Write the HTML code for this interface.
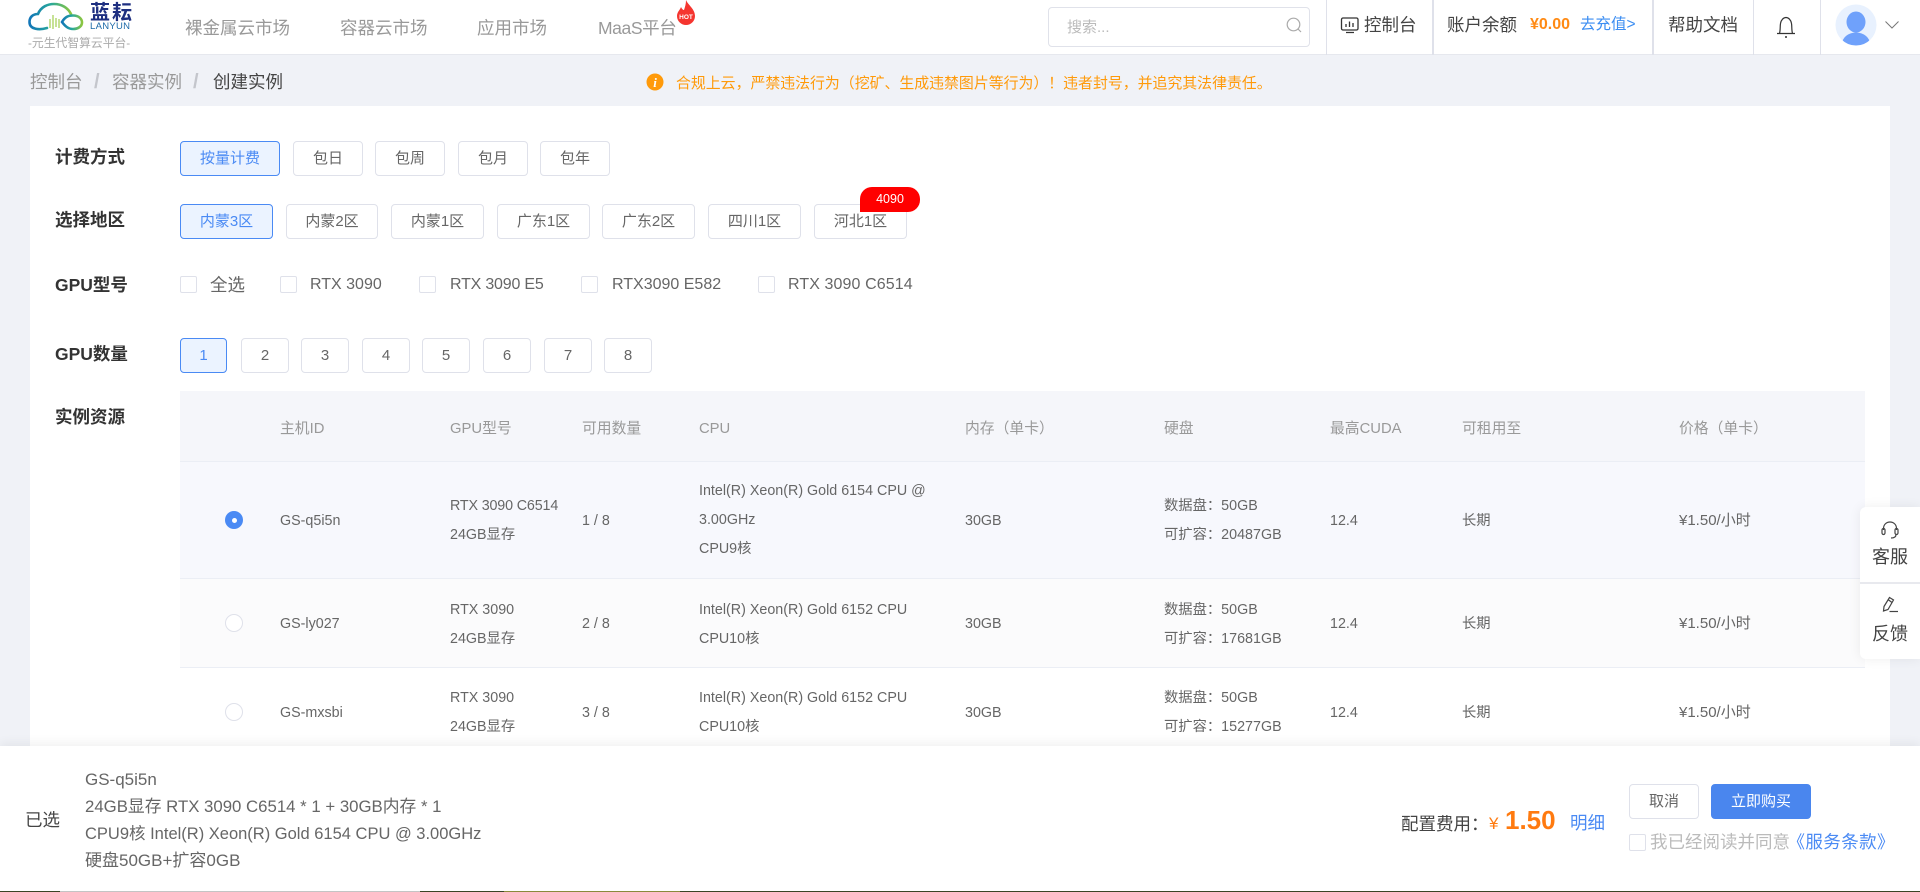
<!DOCTYPE html>
<html lang="zh-CN">
<head>
<meta charset="utf-8">
<title>创建实例</title>
<style>
*{box-sizing:border-box;margin:0;padding:0}
html,body{width:1920px;height:892px;overflow:hidden;background:#f0f2f7}
body{position:relative;font-family:"Liberation Sans","Noto Sans CJK SC",sans-serif;color:#666}
.a{position:absolute}
.t{position:absolute;white-space:nowrap;height:24px;line-height:24px}
.btn{position:absolute;height:35px;line-height:33px;border:1px solid #dfe1ea;border-radius:4px;background:#fff;text-align:center;font-size:15px;color:#666}
.btn.on{background:#ebf3ff;border-color:#4a8af4;color:#4a8af4}
.lb{position:absolute;left:55px;white-space:nowrap;height:24px;line-height:24px;font-size:17.5px;font-weight:700;color:#333}
.cb{position:absolute;width:17px;height:17px;border:1px solid #dfe1ea;border-radius:2px;background:#fff;top:276px}
.ck{position:absolute;top:273px;height:24px;line-height:24px;font-size:16px;color:#666;white-space:nowrap}
.th{position:absolute;top:417px;height:24px;line-height:24px;font-size:14.800px;color:#999;white-space:nowrap}
.td{position:absolute;margin-top:1px;height:24px;line-height:24px;font-size:14.300px;color:#666;white-space:nowrap}
.pr{font-size:15px}
.rd{position:absolute;left:225px;width:18px;height:18px;border-radius:50%;border:1px solid #dfe1ea;background:#fff}
.dv{position:absolute;top:0;width:1px;height:55px;background:#dfe1ea}
.nav{position:absolute;top:16px;height:24px;line-height:24px;font-size:17.5px;color:#999;white-space:nowrap}
.hr{position:absolute;top:13px;height:24px;line-height:24px;font-size:17.5px;color:#444;white-space:nowrap}
.bc{position:absolute;top:70px;height:24px;line-height:24px;font-size:17.5px;color:#999;white-space:nowrap}
.fl{position:absolute;left:85px;height:24px;line-height:24px;font-size:17px;color:#666;white-space:nowrap}
</style>
</head>
<body>

<!-- header -->
<div class="a" style="left:0;top:0;width:1920px;height:55px;background:#fff;border-bottom:1px solid #e6e8ee"></div>

<svg class="a" style="left:0;top:0" width="140" height="36" viewBox="0 0 140 36">
<defs><linearGradient id="g" x1="0" x2="1" y1="0" y2="0"><stop offset="0" stop-color="#1276b8"/><stop offset=".5" stop-color="#27a79b"/><stop offset="1" stop-color="#8cc63f"/></linearGradient></defs>
<path d="M47 28C40 30 29.500 30 29.500 22C29.500 17 33 14 38 14C41 6.500 48 4 54 4C62 4 68 8 71 14" fill="none" stroke="url(#g)" stroke-width="2.600" stroke-linecap="round"/>
<path d="M62 22C65 17 68 15.500 73 15.500C79 15.500 82 19 82 22.500C82 26.500 78 29 73 29C68 29 65 26 62 22" fill="none" stroke="url(#g)" stroke-width="2.600" stroke-linecap="round"/>
<path d="M50 19V28M53 15V29M56 18V27M59 19V28" stroke="#a9d25e" stroke-width="1.300"/>
</svg>
<div class="t" style="left:90px;top:1px;font-size:20px;font-weight:700;letter-spacing:2px;color:#1e2f80">蓝耘</div>
<div class="t" style="left:90px;top:15px;font-size:9.500px;letter-spacing:.3px;color:#1d6aa8">LANYUN</div>
<div class="t" style="left:28px;top:31px;font-size:11.800px;color:#aaa">-元生代智算云平台-</div>

<div class="nav" style="left:185px">裸金属云市场</div>
<div class="nav" style="left:340px">容器云市场</div>
<div class="nav" style="left:477px">应用市场</div>
<div class="nav" style="left:598px;letter-spacing:-.4px">MaaS平台</div>
<svg class="a" style="left:676px;top:0" width="20" height="26" viewBox="676 0 20 26">
<path d="M686 0C688 5 695 9 695 16A9 9 0 0 1 677 16C677 12 680 10 681 7C682 9 683 10 684 10C685 7 686 4 686 0Z" fill="#f5352f"/>
<text x="686" y="19" font-size="6.500" font-weight="700" fill="#fff" text-anchor="middle" font-family="Liberation Sans">HOT</text>
</svg>

<div class="a" style="left:1048px;top:7px;width:262px;height:40px;border:1px solid #e0e2ea;border-radius:4px"></div>
<div class="t" style="left:1067px;top:16px;font-size:15px;color:#bbb">搜索...</div>
<svg class="a" style="left:1285px;top:16px" width="18" height="18" viewBox="0 0 18 18"><circle cx="8.500" cy="8.500" r="6.300" fill="none" stroke="#aaa" stroke-width="1.200"/><path d="M13 13L16 16" stroke="#aaa" stroke-width="1.200"/></svg>

<div class="dv" style="left:1326px"></div>
<div class="dv" style="left:1432px;width:2px"></div>
<div class="dv" style="left:1652px;width:2px"></div>
<div class="dv" style="left:1753px"></div>
<div class="dv" style="left:1820px"></div>

<svg class="a" style="left:1340px;top:15px" width="20" height="20" viewBox="0 0 20 20"><rect x="1.500" y="3" width="16.500" height="12" rx="1.500" fill="none" stroke="#333" stroke-width="1.300"/><path d="M6 12V9M9.500 12V6.500M13 12V8M6 17.500H14" stroke="#333" stroke-width="1.300"/></svg>
<div class="hr" style="left:1364px">控制台</div>
<div class="hr" style="left:1447px">账户余额</div>
<div class="t" style="left:1530px;top:13px;font-size:16px;font-weight:700;color:#ff8a14">¥0.00</div>
<div class="t" style="left:1580px;top:13px;font-size:15.500px;color:#3b8df2">去充值&gt;</div>
<div class="hr" style="left:1668px">帮助文档</div>
<svg class="a" style="left:1775px;top:15px" width="22" height="24" viewBox="0 0 22 24"><path d="M2 18.500H20M4.500 18.500C5.500 15 5 11 5.500 8.500C6 5 8.500 2.500 11 2.500C13.500 2.500 16 5 16.500 8.500C17 11 16.500 15 17.500 18.500" fill="none" stroke="#333" stroke-width="1.200"/><circle cx="11" cy="22" r="1" fill="#333"/></svg>
<svg class="a" style="left:1835px;top:4px" width="42" height="42" viewBox="0 0 42 42"><defs><clipPath id="c"><circle cx="21" cy="21" r="20.500"/></clipPath></defs><circle cx="21" cy="21" r="20.500" fill="#e8f1fe"/><g clip-path="url(#c)"><ellipse cx="21" cy="18" rx="9.500" ry="10.500" fill="#6fa1fb"/><ellipse cx="21" cy="40" rx="14" ry="11.500" fill="#6fa1fb"/></g></svg>
<svg class="a" style="left:1884px;top:20px" width="16" height="10" viewBox="0 0 16 10"><path d="M1.500 1.500L8 8L14.500 1.500" fill="none" stroke="#777" stroke-width="1"/></svg>

<!-- breadcrumb -->
<div class="bc" style="left:30px">控制台</div>
<div class="bc" style="left:94px;color:#c4c6cc;font-weight:700;font-size:20px">/</div>
<div class="bc" style="left:112px">容器实例</div>
<div class="bc" style="left:193px;color:#c4c6cc;font-weight:700;font-size:20px">/</div>
<div class="bc" style="left:213px;color:#444">创建实例</div>

<svg class="a" style="left:646px;top:73px" width="18" height="18" viewBox="0 0 18 18"><circle cx="9" cy="9" r="8.500" fill="#ff9a0a"/><text x="9" y="14" font-size="13" font-weight="700" font-style="italic" fill="#fff" text-anchor="middle" font-family="Liberation Serif">i</text></svg>
<div class="t" style="left:676px;top:72px;font-size:14.900px;color:#ff9a0a">合规上云，严禁违法行为（挖矿、生成违禁图片等行为）！违者封号，并追究其法律责任。</div>

<!-- card -->
<div class="a" style="left:30px;top:106px;width:1860px;height:786px;background:#fff"></div>

<div class="lb" style="top:145px">计费方式</div>
<div class="btn on" style="left:180px;top:141px;width:100px">按量计费</div>
<div class="btn" style="left:293px;top:141px;width:70px">包日</div>
<div class="btn" style="left:375px;top:141px;width:70px">包周</div>
<div class="btn" style="left:458px;top:141px;width:70px">包月</div>
<div class="btn" style="left:540px;top:141px;width:70px">包年</div>

<div class="lb" style="top:208px">选择地区</div>
<div class="btn on" style="left:180px;top:204px;width:93px">内蒙3区</div>
<div class="btn" style="left:286px;top:204px;width:92px">内蒙2区</div>
<div class="btn" style="left:391px;top:204px;width:93px">内蒙1区</div>
<div class="btn" style="left:497px;top:204px;width:93px">广东1区</div>
<div class="btn" style="left:602px;top:204px;width:93px">广东2区</div>
<div class="btn" style="left:708px;top:204px;width:93px">四川1区</div>
<div class="btn" style="left:814px;top:204px;width:93px">河北1区</div>
<div class="a" style="left:860px;top:187px;width:60px;height:25px;line-height:25px;background:#f00;color:#fff;font-size:12.500px;text-align:center;border-radius:12px 12px 12px 0">4090</div>

<div class="lb" style="top:273px">GPU型号</div>
<div class="cb" style="left:180px"></div><div class="ck" style="left:210px;font-size:17.500px">全选</div>
<div class="cb" style="left:280px"></div><div class="ck" style="left:310px">RTX 3090</div>
<div class="cb" style="left:419px"></div><div class="ck" style="left:450px;letter-spacing:-.2px">RTX 3090 E5</div>
<div class="cb" style="left:581px"></div><div class="ck" style="left:612px">RTX3090 E582</div>
<div class="cb" style="left:758px"></div><div class="ck" style="left:788px;letter-spacing:.1px">RTX 3090 C6514</div>

<div class="lb" style="top:342px">GPU数量</div>
<div class="btn on" style="left:180px;top:338px;width:47px">1</div>
<div class="btn" style="left:241px;top:338px;width:48px">2</div>
<div class="btn" style="left:301px;top:338px;width:48px">3</div>
<div class="btn" style="left:362px;top:338px;width:48px">4</div>
<div class="btn" style="left:422px;top:338px;width:48px">5</div>
<div class="btn" style="left:483px;top:338px;width:48px">6</div>
<div class="btn" style="left:544px;top:338px;width:48px">7</div>
<div class="btn" style="left:604px;top:338px;width:48px">8</div>

<div class="lb" style="top:405px">实例资源</div>

<!-- table -->
<div class="a" style="left:180px;top:391px;width:1685px;height:71px;background:#f5f6fa;border-bottom:1px solid #ebeef5"></div>
<div class="a" style="left:180px;top:462px;width:1685px;height:117px;background:#f7f8fd;border-bottom:1px solid #ebeef5"></div>
<div class="a" style="left:180px;top:579px;width:1685px;height:89px;background:#fbfbfc;border-bottom:1px solid #ebeef5"></div>

<div class="th" style="left:280px">主机ID</div>
<div class="th" style="left:450px">GPU型号</div>
<div class="th" style="left:582px">可用数量</div>
<div class="th" style="left:699px">CPU</div>
<div class="th" style="left:965px">内存（单卡）</div>
<div class="th" style="left:1164px">硬盘</div>
<div class="th" style="left:1330px">最高CUDA</div>
<div class="th" style="left:1462px">可租用至</div>
<div class="th" style="left:1679px">价格（单卡）</div>

<!-- row 1 -->
<div class="a" style="left:225px;top:511px;width:18px;height:18px;border-radius:50%;background:#4a8af4"></div>
<div class="a" style="left:231.500px;top:517.500px;width:5px;height:5px;border-radius:50%;background:#fff"></div>
<div class="td" style="left:280px;top:508px">GS-q5i5n</div>
<div class="td" style="left:450px;top:493px;letter-spacing:-.15px">RTX 3090 C6514</div>
<div class="td" style="left:450px;top:522px">24GB显存</div>
<div class="td" style="left:582px;top:508px">1 / 8</div>
<div class="td" style="left:699px;top:478px">Intel(R) Xeon(R) Gold 6154 CPU @</div>
<div class="td" style="left:699px;top:507px">3.00GHz</div>
<div class="td" style="left:699px;top:536px">CPU9核</div>
<div class="td" style="left:965px;top:508px">30GB</div>
<div class="td" style="left:1164px;top:493px">数据盘：50GB</div>
<div class="td" style="left:1164px;top:522px">可扩容：20487GB</div>
<div class="td" style="left:1330px;top:508px">12.4</div>
<div class="td" style="left:1462px;top:508px">长期</div>
<div class="td pr" style="left:1679px;top:508px">¥1.50/小时</div>

<!-- row 2 -->
<div class="rd" style="top:614px"></div>
<div class="td" style="left:280px;top:611px">GS-ly027</div>
<div class="td" style="left:450px;top:597px">RTX 3090</div>
<div class="td" style="left:450px;top:626px">24GB显存</div>
<div class="td" style="left:582px;top:611px">2 / 8</div>
<div class="td" style="left:699px;top:597px">Intel(R) Xeon(R) Gold 6152 CPU</div>
<div class="td" style="left:699px;top:626px">CPU10核</div>
<div class="td" style="left:965px;top:611px">30GB</div>
<div class="td" style="left:1164px;top:597px">数据盘：50GB</div>
<div class="td" style="left:1164px;top:626px">可扩容：17681GB</div>
<div class="td" style="left:1330px;top:611px">12.4</div>
<div class="td" style="left:1462px;top:611px">长期</div>
<div class="td pr" style="left:1679px;top:611px">¥1.50/小时</div>

<!-- row 3 -->
<div class="rd" style="top:703px"></div>
<div class="td" style="left:280px;top:700px">GS-mxsbi</div>
<div class="td" style="left:450px;top:685px">RTX 3090</div>
<div class="td" style="left:450px;top:714px">24GB显存</div>
<div class="td" style="left:582px;top:700px">3 / 8</div>
<div class="td" style="left:699px;top:685px">Intel(R) Xeon(R) Gold 6152 CPU</div>
<div class="td" style="left:699px;top:714px">CPU10核</div>
<div class="td" style="left:965px;top:700px">30GB</div>
<div class="td" style="left:1164px;top:685px">数据盘：50GB</div>
<div class="td" style="left:1164px;top:714px">可扩容：15277GB</div>
<div class="td" style="left:1330px;top:700px">12.4</div>
<div class="td" style="left:1462px;top:700px">长期</div>
<div class="td pr" style="left:1679px;top:700px">¥1.50/小时</div>

<!-- side panel -->
<div class="a" style="left:1860px;top:507px;width:60px;height:152px;background:#fff;border-radius:6px 0 0 6px;box-shadow:0 0 12px rgba(0,0,0,.07)"></div>
<div class="a" style="left:1860px;top:582px;width:60px;height:2px;background:#e8e9ee"></div>
<svg class="a" style="left:1880px;top:520px" width="20" height="20" viewBox="0 0 20 20"><path d="M3.500 10V8.500C3.500 4.500 6.500 2 10 2C13.500 2 16.500 4.500 16.500 8.500V10" fill="none" stroke="#444" stroke-width="1.200"/><rect x="2" y="8.500" width="3" height="6" rx="1.500" fill="none" stroke="#444" stroke-width="1.200"/><rect x="15" y="8.500" width="3" height="6" rx="1.500" fill="none" stroke="#444" stroke-width="1.200"/><path d="M16 14.500C16 17 14 18 11 18" fill="none" stroke="#444" stroke-width="1.200"/></svg>
<div class="t" style="left:1872px;top:545px;font-size:18px;color:#444">客服</div>
<svg class="a" style="left:1880px;top:596px" width="20" height="20" viewBox="0 0 20 20"><path d="M9.500 1.500L13.500 4L8 13.500L3.500 15L4 10.500Z M8 3.500L12 6.500" fill="none" stroke="#444" stroke-width="1.200"/><path d="M9.500 15.500H18" stroke="#444" stroke-width="1.200"/></svg>
<div class="t" style="left:1872px;top:622px;font-size:18px;color:#444">反馈</div>

<!-- footer -->
<div class="a" style="left:0;top:746px;width:1920px;height:145px;background:#fff;box-shadow:0 -3px 10px rgba(0,0,0,.06)"></div>
<div class="t" style="left:25px;top:808px;font-size:17.500px;color:#444">已选</div>
<div class="fl" style="top:768px">GS-q5i5n</div>
<div class="fl" style="top:795px;font-size:16.800px">24GB显存 RTX 3090 C6514 * 1 + 30GB内存 * 1</div>
<div class="fl" style="top:822px;font-size:16.500px">CPU9核 Intel(R) Xeon(R) Gold 6154 CPU @ 3.00GHz</div>
<div class="fl" style="top:849px">硬盘50GB+扩容0GB</div>

<div class="t" style="left:1401px;top:812px;font-size:17.500px;color:#444">配置费用：</div>
<div class="t" style="left:1489px;top:812px;font-size:17px;color:#ff7a0f">¥</div>
<div class="t" style="left:1505px;top:808px;font-size:26px;font-weight:700;color:#ff7a0f">1.50</div>
<div class="t" style="left:1570px;top:811px;font-size:17.500px;color:#4a8af4">明细</div>
<div class="btn" style="left:1629px;top:784px;width:70px">取消</div>
<div class="btn" style="left:1711px;top:784px;width:100px;background:#4a86ee;border-color:#4a86ee;color:#fff">立即购买</div>
<div class="a" style="left:1629px;top:834px;width:17px;height:17px;border:1px solid #dfe1ea;border-radius:2px"></div>
<div class="t" style="left:1650px;top:830px;font-size:17.500px;color:#bbb">我已经阅读并同意</div>
<div class="t" style="left:1787.500px;top:830px;font-size:17.500px;letter-spacing:.4px;color:#4a8af4">《服务条款》</div>

<!-- bottom strip -->
<div class="a" style="left:0;top:891px;width:1920px;height:1px;background:linear-gradient(90deg,#3a4526 0,#3a4526 60px,#c4c4c4 60px,#c4c4c4 420px,#3a4526 420px,#3a4526 504px,#8a8a3a 504px,#8a8a3a 680px,#3a4526 680px,#3a4526 100%)"></div>
</body>
</html>
